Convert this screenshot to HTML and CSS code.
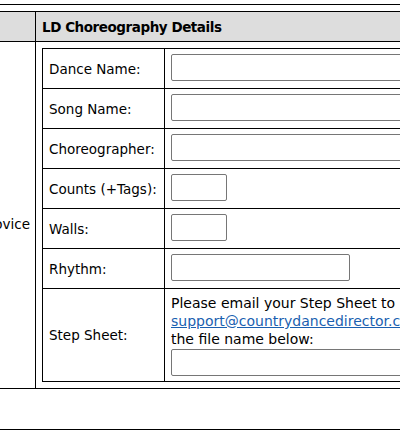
FILE: index.html
```html
<!DOCTYPE html>
<html>
<head>
<meta charset="utf-8">
<link rel="stylesheet" href="styles.css">
</head>
<body>
<div class="page">
  <div class="top-rule"></div>
  <div class="outer">
    <div class="head-left"></div>
    <div class="head-right">LD Choreography Details</div>
    <div class="level">Novice</div>
    <div class="body-right">
      <div class="form">
        <div class="label">Dance Name:</div>
        <div class="value"><input class="field wide" type="text"></div>
        <div class="label">Song Name:</div>
        <div class="value"><input class="field wide" type="text"></div>
        <div class="label">Choreographer:</div>
        <div class="value"><input class="field wide" type="text"></div>
        <div class="label">Counts (+Tags):</div>
        <div class="value"><input class="field small" type="text"></div>
        <div class="label">Walls:</div>
        <div class="value"><input class="field small" type="text"></div>
        <div class="label">Rhythm:</div>
        <div class="value"><input class="field medium" type="text"></div>
        <div class="label">Step Sheet:</div>
        <div class="value step">
          <div class="note">Please email your Step Sheet to<br><a href="#">support@countrydancedirector.com</a> with<br>the file name below:</div>
          <input class="field wide" type="text">
        </div>
      </div>
    </div>
  </div>
  <div class="bottom-rule"></div>
</div>
</body>
</html>
```

FILE: styles.css
```css
html, body {
  margin: 0;
  padding: 0;
  background: #fff;
  overflow: hidden;
}
body {
  font-family: "DejaVu Sans", Verdana, sans-serif;
  font-size: 14px;
  color: #000;
}
.page {
  margin-left: -60px;
  width: 560px;
}
.top-rule {
  height: 4px;
  border-bottom: 1px solid #000;
  margin-bottom: 6px;
}
.outer {
  display: grid;
  grid-template-columns: 95px 1fr;
  grid-template-rows: 29px auto;
  gap: 1px;
  padding: 1px 0;
  background: #000;
}
.head-left, .head-right {
  background: #ddd;
}
.head-right {
  font-weight: bold;
  font-size: 13.5px;
  letter-spacing: -0.45px;
  display: flex;
  align-items: center;
  padding-left: 6px;
}
.level {
  background: #fff;
  display: flex;
  align-items: center;
  justify-content: flex-end;
  padding: 18px 5px 0 0;
  font-size: 13.5px;
}
.body-right {
  background: #fff;
  padding: 6px;
}
.form {
  display: grid;
  grid-template-columns: 121px 1fr;
  grid-template-rows: repeat(6, 39px) 92px;
  gap: 1px;
  padding: 1px;
  background: #000;
  width: 420px;
}
.label {
  background: #fff;
  display: flex;
  align-items: center;
  padding-left: 6px;
  font-size: 13.5px;
}
.value {
  background: #fff;
  padding: 5px 6px;
}
.value.step {
  box-sizing: border-box;
  line-height: 18px;
}
.field {
  display: block;
  box-sizing: border-box;
  height: 27px;
  border: 1px solid #767676;
  border-radius: 2px;
  background: #fff;
  margin: 0;
  padding: 0 4px;
  font: inherit;
}
.field.wide { width: 300px; }
.field.small { width: 56px; }
.field.medium { width: 179px; }
.note {
  white-space: nowrap;
}
.note a {
  color: #1a5fb0;
  text-decoration: underline;
}
.step .field {
  margin-top: 1px;
}
.bottom-rule {
  height: 40px;
  border-bottom: 1px solid #000;
}
```
